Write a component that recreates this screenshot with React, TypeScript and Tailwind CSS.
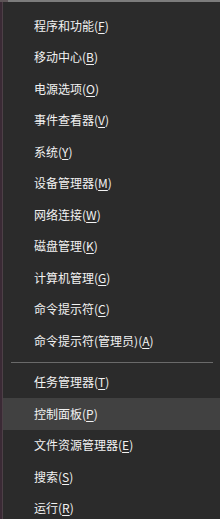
import React from 'react';

type Item = { label: string; key: string; active?: boolean };

const TOP_ITEMS: Item[] = [
  { label: '程序和功能', key: 'F' },
  { label: '移动中心', key: 'B' },
  { label: '电源选项', key: 'O' },
  { label: '事件查看器', key: 'V' },
  { label: '系统', key: 'Y' },
  { label: '设备管理器', key: 'M' },
  { label: '网络连接', key: 'W' },
  { label: '磁盘管理', key: 'K' },
  { label: '计算机管理', key: 'G' },
  { label: '命令提示符', key: 'C' },
  { label: '命令提示符(管理员)', key: 'A' },
];

const BOTTOM_ITEMS: Item[] = [
  { label: '任务管理器', key: 'T' },
  { label: '控制面板', key: 'P', active: true },
  { label: '文件资源管理器', key: 'E' },
  { label: '搜索', key: 'S' },
  { label: '运行', key: 'R' },
];

const MenuRow = ({ item }: { item: Item }) => (
  <div
    className={`h-[31.5px] shrink-0 flex items-center pl-[31px] text-[12px] leading-none text-[#f2f2f2] ${item.active ? 'bg-[#414141]' : ''}`}
  >
    <span>
      {item.label}(<span className="underline underline-offset-[2px]">{item.key}</span>)
    </span>
  </div>
);

export default function App() {
  return (
    <div
      className="w-[220px] h-[519px] overflow-hidden bg-[#2b2b2b] flex flex-col"
      style={{ fontFamily: '"Noto Sans CJK SC", "Noto Sans", sans-serif' }}
    >
      {/* top edge of the window behind */}
      <div className="h-[2px] shrink-0 flex">
        <div className="w-[8px] bg-[#5e5558]" />
        <div className="flex-1 bg-[#7c7c7c]" />
      </div>
      <div className="flex-1 flex min-h-0">
        {/* left edge */}
        <div className="w-[3px] shrink-0 flex">
          <div className="w-[2px] bg-[#3a2a35]" />
          <div className="w-[1px] bg-[#4d4047]" />
        </div>
        <div className="flex-1 flex flex-col pt-[8px] min-w-0">
          {TOP_ITEMS.map(item => (
            <MenuRow key={item.label} item={item} />
          ))}
          <div className="shrink-0 pt-[5px] pb-[4px] pl-[8px] pr-[7px]">
            <div className="h-[1px] bg-[#6a6a6a]" />
          </div>
          {BOTTOM_ITEMS.map(item => (
            <MenuRow key={item.label} item={item} />
          ))}
        </div>
      </div>
    </div>
  );
}
